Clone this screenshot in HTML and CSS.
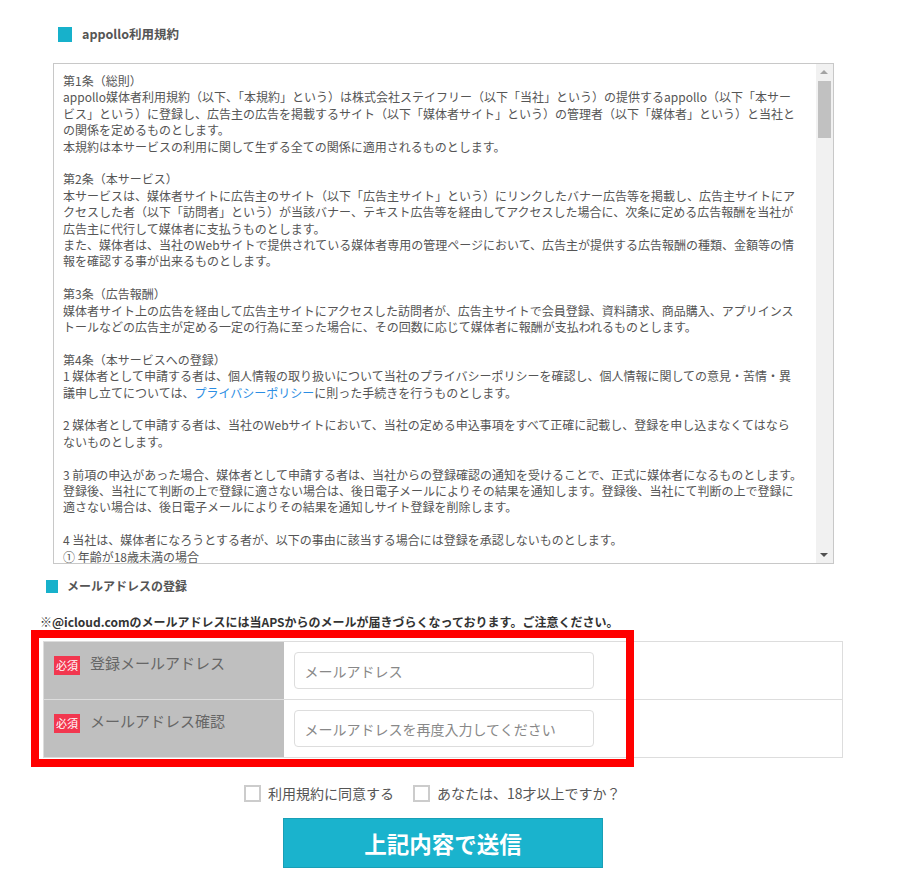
FILE: index.html
```html
<!DOCTYPE html>
<html lang="ja">
<head>
    <meta charset="UTF-8">
    <meta name="viewport" content="width=device-width, initial-scale=1.0">
    <title>appollo 媒体者登録</title>
    <link rel="stylesheet" href="styles.css">
</head>
<body>
    <div class="page">
        <h2 class="sec-head terms-head"><span class="mark"></span>appollo利用規約</h2>

        <div class="terms-box">
            <div class="terms-text">
                <p>第1条（総則）<br>
                appollo媒体者利用規約（以下、「本規約」という）は株式会社ステイフリー（以下「当社」という）の提供するappollo（以下「本サー<br>ビス」という）に登録し、広告主の広告を掲載するサイト（以下「媒体者サイト」という）の管理者（以下「媒体者」という）と当社と<br>の関係を定めるものとします。<br>
                本規約は本サービスの利用に関して生ずる全ての関係に適用されるものとします。</p>

                <p>第2条（本サービス）<br>
                本サービスは、媒体者サイトに広告主のサイト（以下「広告主サイト」という）にリンクしたバナー広告等を掲載し、広告主サイトにア<br>クセスした者（以下「訪問者」という）が当該バナー、テキスト広告等を経由してアクセスした場合に、次条に定める広告報酬を当社が<br>広告主に代行して媒体者に支払うものとします。<br>
                また、媒体者は、当社のWebサイトで提供されている媒体者専用の管理ページにおいて、広告主が提供する広告報酬の種類、金額等の情<br>報を確認する事が出来るものとします。</p>

                <p>第3条（広告報酬）<br>
                媒体者サイト上の広告を経由して広告主サイトにアクセスした訪問者が、広告主サイトで会員登録、資料請求、商品購入、アプリインス<br>トールなどの広告主が定める一定の行為に至った場合に、その回数に応じて媒体者に報酬が支払われるものとします。</p>

                <p>第4条（本サービスへの登録）<br>
                1 媒体者として申請する者は、個人情報の取り扱いについて当社のプライバシーポリシーを確認し、個人情報に関しての意見・苦情・異<br>議申し立てについては、<a href="#">プライバシーポリシー</a>に則った手続きを行うものとします。</p>

                <p>2 媒体者として申請する者は、当社のWebサイトにおいて、当社の定める申込事項をすべて正確に記載し、登録を申し込まなくてはなら<br>ないものとします。</p>

                <p>3 前項の申込があった場合、媒体者として申請する者は、当社からの登録確認の通知を受けることで、正式に媒体者になるものとします。<br>
                登録後、当社にて判断の上で登録に適さない場合は、後日電子メールによりその結果を通知します。登録後、当社にて判断の上で登録に<br>適さない場合は、後日電子メールによりその結果を通知しサイト登録を削除します。</p>

                <p>4 当社は、媒体者になろうとする者が、以下の事由に該当する場合には登録を承認しないものとします。<br>
                ① 年齢が18歳未満の場合<br>
                ② 過去に本サービスにおいて登録抹消されたことがある場合</p>
            </div>
            <div class="scrollbar">
                <span class="arrow up"></span>
                <span class="thumb"></span>
                <span class="arrow down"></span>
            </div>
        </div>

        <h2 class="sec-head mail-head"><span class="mark"></span>メールアドレスの登録</h2>
        <p class="notice">※@icloud.comのメールアドレスには当APSからのメールが届きづらくなっております。ご注意ください。</p>

        <div class="form-wrap">
            <table class="form-table">
                <tr>
                    <th><span class="req">必須</span>登録メールアドレス</th>
                    <td><input type="text" placeholder="メールアドレス"></td>
                </tr>
                <tr>
                    <th><span class="req">必須</span>メールアドレス確認</th>
                    <td><input type="text" placeholder="メールアドレスを再度入力してください"></td>
                </tr>
            </table>
            <div class="highlight"></div>
        </div>

        <div class="agree">
            <label><span class="check"></span>利用規約に同意する</label>
            <label><span class="check"></span>あなたは、18才以上ですか？</label>
        </div>

        <button class="submit">上記内容で送信</button>
    </div>
</body>
</html>
```

FILE: styles.css
```css
body {
    margin: 0;
    padding: 0;
    background: #fff;
    font-family: "Noto Sans CJK JP", "Noto Sans", sans-serif;
    color: #555;
}
.page {
    width: 901px;
    padding-top: 26px;
}
.sec-head {
    display: flex;
    align-items: center;
    margin: 0;
    font-weight: bold;
    color: #555;
}
.sec-head .mark {
    display: inline-block;
    background: #17b1cb;
}
.terms-head {
    margin-left: 58px;
    font-size: 12.5px;
    line-height: 16px;
}
.terms-head .mark {
    width: 14px;
    height: 15px;
    margin-right: 10px;
}
.terms-box {
    display: flex;
    box-sizing: border-box;
    width: 781px;
    height: 501px;
    margin: 21px 0 0 53px;
    border: 1px solid #c8c8c8;
}
.terms-text {
    flex: 1;
    overflow: hidden;
    padding: 9px 4px 0 9px;
    font-size: 12px;
    line-height: 16.4px;
    color: #555;
}
.terms-text p {
    margin: 0 0 16.4px;
}
.terms-text a {
    color: #2b8de3;
    text-decoration: none;
}
.scrollbar {
    position: relative;
    width: 17px;
    background: #f1f1f1;
}
.scrollbar .thumb {
    position: absolute;
    left: 2px;
    right: 2px;
    top: 17px;
    height: 57px;
    background: #c1c1c1;
}
.scrollbar .arrow {
    position: absolute;
    left: 4px;
    width: 0;
    height: 0;
    border-left: 4px solid transparent;
    border-right: 4px solid transparent;
}
.scrollbar .up {
    top: 6px;
    border-bottom: 4px solid #a3a3a3;
}
.scrollbar .down {
    bottom: 6px;
    border-top: 4px solid #505050;
}
.mail-head {
    margin: 14px 0 0 46px;
    font-size: 12px;
    line-height: 16px;
}
.mail-head .mark {
    width: 12px;
    height: 13px;
    margin-right: 9px;
}
.notice {
    margin: 19px 0 0 40px;
    font-size: 12px;
    line-height: 18px;
    font-weight: bold;
    color: #333;
}
.form-wrap {
    position: relative;
    margin: 10px 0 0 43px;
    width: 800px;
}
.form-table {
    width: 800px;
    border-collapse: collapse;
    border: 1px solid #ddd;
}
.form-table th {
    width: 240px;
    height: 58px;
    box-sizing: border-box;
    padding: 11px 10px 0 10px;
    vertical-align: top;
    text-align: left;
    background: #bfbfbf;
    border-bottom: 1px solid #ddd;
    font-size: 15px;
    font-weight: normal;
    line-height: 19px;
    color: #666;
}
.form-table td {
    padding: 0 10px;
    border-bottom: 1px solid #ddd;
    vertical-align: middle;
}
.req {
    display: inline-block;
    margin-right: 10px;
    margin-top: 3px;
    padding: 0 2px;
    background: #f2374f;
    color: #fff;
    font-size: 11px;
    line-height: 19px;
    vertical-align: top;
}
.form-table input {
    box-sizing: border-box;
    width: 300px;
    height: 37px;
    padding: 0 10px;
    border: 1px solid #ddd;
    border-radius: 4px;
    font-family: inherit;
    font-size: 14px;
    color: #555;
}
.form-table input::placeholder {
    color: #888;
}
.highlight {
    position: absolute;
    left: -12px;
    top: -11px;
    width: 603px;
    height: 137px;
    box-sizing: border-box;
    border: 8px solid #ff0000;
}
.agree {
    display: flex;
    gap: 19px;
    margin: 27px 0 0 244px;
    font-size: 14px;
    line-height: 17px;
    color: #555;
}
.agree label {
    display: flex;
    align-items: center;
}
.check {
    display: inline-block;
    box-sizing: border-box;
    width: 17px;
    height: 17px;
    margin-right: 7px;
    border: 2px solid #ccc;
    background: #fff;
}
.submit {
    display: block;
    width: 320px;
    height: 50px;
    margin: 16px 0 0 283px;
    border: 1px solid #199fb6;
    background: #1ab3cd;
    color: #fff;
    font-family: inherit;
    font-size: 22.5px;
    font-weight: bold;
    cursor: pointer;
}
```
